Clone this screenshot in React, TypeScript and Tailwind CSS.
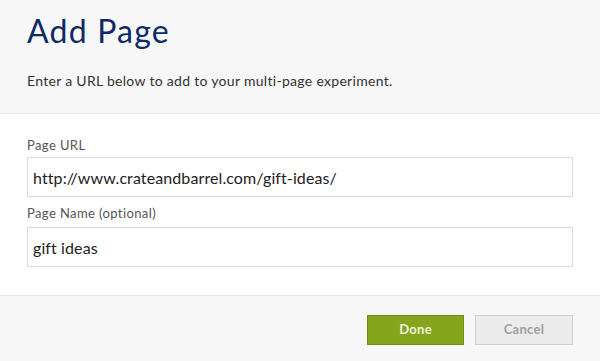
import React from 'react'

const App = () => {
  return (
    <div className="h-[361px] w-[600px] overflow-hidden bg-white font-['Lato','Liberation_Sans',sans-serif]">
      <div className="h-[114px] border-b border-[#e6e6e6] bg-[#f7f7f7] px-[27px] pt-[11px]">
        <h1 className="text-[32px] leading-[40px] tracking-[1.2px] text-[#0d2a66]">Add Page</h1>
        <p className="mt-[21px] text-[14px] leading-[18px] tracking-[0.3px] text-[#333]">
          Enter a URL below to add to your multi-page experiment.
        </p>
      </div>
      <div className="h-[181px] px-[27px] pt-[23px]">
        <label className="block text-[13px] leading-[16px] tracking-[0.4px] text-[#555]">Page URL</label>
        <input
          className="mt-[4px] block h-[40px] w-[546px] border border-[#d9d9d9] px-[5px] text-[16px] tracking-[0.1px] text-[#222] outline-none"
          defaultValue="http://www.crateandbarrel.com/gift-ideas/"
        />
        <label className="mt-[8px] block text-[13px] leading-[16px] tracking-[0.4px] text-[#555]">
          Page Name (optional)
        </label>
        <input
          className="mt-[6px] block h-[40px] w-[546px] border border-[#d9d9d9] px-[5px] text-[16px] tracking-[0.1px] text-[#222] outline-none"
          defaultValue="gift ideas"
        />
      </div>
      <div className="flex h-[66px] justify-end gap-[11px] border-t border-[#e6e6e6] bg-[#f7f7f7] pr-[27px] pt-[19px]">
        <button className="h-[30px] w-[97px] border border-[#6f8c14] bg-[#84a51c] text-[13px] font-bold tracking-[0.3px] text-[#eef3dc]">
          Done
        </button>
        <button className="h-[30px] w-[98px] border border-[#d0d0d0] bg-[#ececec] text-[13px] font-bold tracking-[0.3px] text-[#a0a0a0]">
          Cancel
        </button>
      </div>
    </div>
  )
}

export default App
